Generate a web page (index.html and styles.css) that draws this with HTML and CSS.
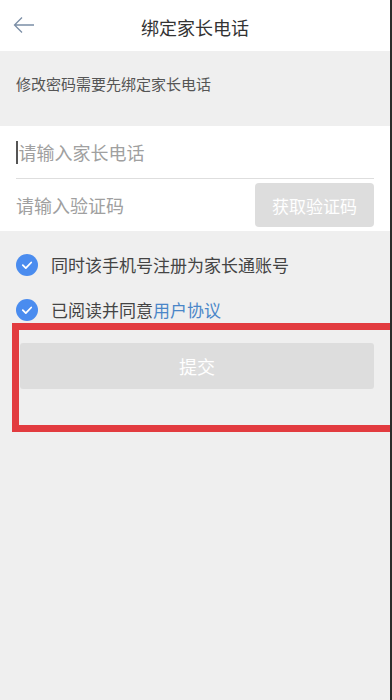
FILE: index.html
```html
<!DOCTYPE html>
<html lang="zh-CN">
<head>
<meta charset="utf-8">
<title>绑定家长电话</title>
<link rel="stylesheet" href="styles.css">
</head>
<body>
<div class="screen">
  <header class="topbar">
    <span class="back">
      <svg width="22" height="18" viewBox="0 0 22 18"><path d="M21 9H2M9 1.5L1.5 9L9 16.5" fill="none" stroke="#7b8ea6" stroke-width="1.3"/></svg>
    </span>
    <h1 class="title">绑定家长电话</h1>
  </header>
  <div class="hint">修改密码需要先绑定家长电话</div>
  <section class="form">
    <div class="row first">
      <span class="caret"></span><span class="placeholder">请输入家长电话</span>
    </div>
    <div class="row second">
      <span class="placeholder">请输入验证码</span>
      <span class="code-btn">获取验证码</span>
    </div>
  </section>
  <div class="checks">
    <div class="check-row">
      <span class="tick"><svg width="22" height="22" viewBox="0 0 22 22"><circle cx="11" cy="11" r="11" fill="#4a8cef"/><path d="M6.8 11.2l3 2.9 5.4-5.6" fill="none" stroke="#fff" stroke-width="1.8" stroke-linecap="round" stroke-linejoin="round"/></svg></span>
      <span class="check-text">同时该手机号注册为家长通账号</span>
    </div>
    <div class="check-row">
      <span class="tick"><svg width="22" height="22" viewBox="0 0 22 22"><circle cx="11" cy="11" r="11" fill="#4a8cef"/><path d="M6.8 11.2l3 2.9 5.4-5.6" fill="none" stroke="#fff" stroke-width="1.8" stroke-linecap="round" stroke-linejoin="round"/></svg></span>
      <span class="check-text">已阅读并同意<span class="link">用户协议</span></span>
    </div>
  </div>
  <div class="submit-wrap">
    <div class="submit">提交</div>
    <div class="highlight"></div>
  </div>
</div>
</body>
</html>
```
FILE: styles.css
```css
html, body {
  margin: 0;
  padding: 0;
}
body {
  font-family: "Noto Sans CJK SC", "Noto Sans", sans-serif;
  background: #efefef;
}
.screen {
  width: 390px;
  height: 700px;
  background: #efefef;
  border-right: 2px solid #2b2b2b;
  overflow: hidden;
  position: relative;
}
.topbar {
  height: 51px;
  background: #ffffff;
  display: flex;
  align-items: center;
  justify-content: center;
  position: relative;
}
.back {
  position: absolute;
  left: 13px;
  top: 16px;
  display: flex;
}
.title {
  margin: 0;
  font-size: 18px;
  font-weight: normal;
  color: #333333;
  line-height: 24px;
  padding-top: 2px;
}
.hint {
  height: 75px;
  box-sizing: border-box;
  padding: 23px 16px 0;
  font-size: 15px;
  line-height: 20px;
  color: #555555;
}
.form {
  background: #ffffff;
}
.row {
  height: 52px;
  display: flex;
  align-items: center;
  margin-left: 16px;
  margin-right: 16px;
}
.row.first {
  border-bottom: 1px solid #dedede;
}
.caret {
  width: 1.5px;
  height: 23px;
  background: #555;
  margin-right: 1px;
}
.placeholder {
  font-size: 18px;
  color: #a0a0a0;
  flex: 1;
}
.code-btn {
  width: 119px;
  height: 44px;
  background: #dddddd;
  border-radius: 4px;
  color: #ffffff;
  font-size: 17px;
  display: flex;
  align-items: center;
  justify-content: center;
}
.checks {
  padding-top: 11px;
  padding-left: 16px;
}
.check-row {
  height: 45px;
  display: flex;
  align-items: center;
}
.tick {
  display: flex;
  width: 22px;
  height: 22px;
  margin-right: 13px;
}
.check-text {
  font-size: 17px;
  color: #444444;
}
.link {
  color: #4a86c8;
}
.submit-wrap {
  position: relative;
  padding: 11px 16px 0 20px;
}
.submit {
  height: 46px;
  background: #dddddd;
  border-radius: 3px;
  color: #ffffff;
  font-size: 18px;
  display: flex;
  align-items: center;
  justify-content: center;
}
.highlight {
  position: absolute;
  left: 12px;
  top: -9px;
  width: 390px;
  height: 109px;
  box-sizing: border-box;
  border: 7px solid #e23b3f;
}
```
